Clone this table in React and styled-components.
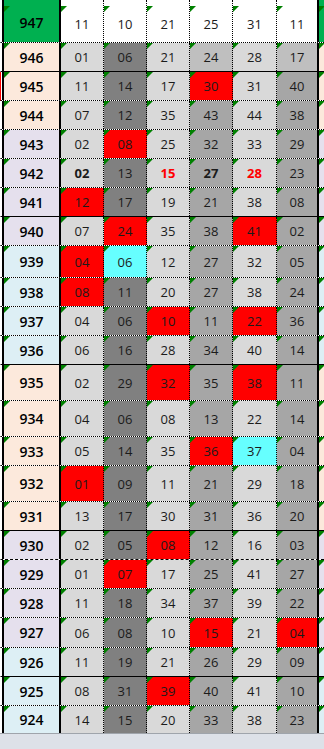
import React from "react";
import styled, { createGlobalStyle } from "styled-components";

const GlobalStyle = createGlobalStyle`
  html, body {
    margin: 0;
    padding: 0;
    background: #fff;
  }
  body {
    font-family: "Open Sans", "Liberation Sans", sans-serif;
    overflow: hidden;
  }
`;

const PEACH = "#fce9dc";
const LILAC = "#e5e0ed";
const SKY = "#ddeff5";

// * = red fill, ~ = cyan fill, ^ = bold, ! = bold red text, + = lighter grey
const ROWS = [
  { n: 947, v: "11 10 21 25 31 11", h: 43, bg: "#00b050", line: "dotted", head: true },
  { n: 946, v: "01 06 21 24+ 28 17+", h: 29, bg: PEACH, line: "solid" },
  { n: 945, v: "11 14 17 30* 31 40", h: 29, bg: PEACH, line: "dotted", mark: true },
  { n: 944, v: "07 12 35 43 44 38", h: 29, bg: PEACH, line: "dotted" },
  { n: 943, v: "02 08* 25 32 33 29", h: 29, bg: LILAC, line: "dotted" },
  { n: 942, v: "02^ 13 15! 27^ 28! 23", h: 29, bg: LILAC, line: "dotted" },
  { n: 941, v: "12* 17 19 21 38 08", h: 29, bg: LILAC, line: "solid" },
  { n: 940, v: "07 24* 35 38 41* 02", h: 29, bg: LILAC, line: "dotted" },
  { n: 939, v: "04* 06~ 12 27 32 05", h: 32, bg: SKY, line: "dotted" },
  { n: 938, v: "08* 11 20 27 38 24", h: 29, bg: SKY, line: "dotted" },
  { n: 937, v: "04 06 10* 11 22* 36", h: 29, bg: SKY, line: "dotted" },
  { n: 936, v: "06 16 28 34 40 14", h: 29, bg: SKY, line: "solid" },
  { n: 935, v: "02 29 32* 35 38* 11", h: 36, bg: PEACH, line: "dotted" },
  { n: 934, v: "04 06 08 13 22 14", h: 36, bg: PEACH, line: "dotted" },
  { n: 933, v: "05 14 35 36* 37~ 04", h: 29, bg: PEACH, line: "dotted" },
  { n: 932, v: "01* 09 11 21 29 18", h: 36, bg: PEACH, line: "dotted" },
  { n: 931, v: "13 17 30 31 36 20", h: 29, bg: PEACH, line: "solid" },
  { n: 930, v: "02 05 08* 12 16 03", h: 29, bg: LILAC, line: "dashed" },
  { n: 929, v: "01 07* 17 25 41 27", h: 29, bg: LILAC, line: "dotted" },
  { n: 928, v: "11 18 34 37 39 22", h: 29, bg: LILAC, line: "dotted" },
  { n: 927, v: "06 08 10 15* 21 04*", h: 30, bg: LILAC, line: "dotted" },
  { n: 926, v: "11 19 21 26 29 09", h: 29, bg: SKY, line: "solid" },
  { n: 925, v: "08 31 39* 40 41 10", h: 29, bg: SKY, line: "dotted" },
  { n: 924, v: "14 15 20 33 38 23", h: 27, bg: SKY, line: "none" },
];

const COL_BG = ["#d9d9d9", "#808080", "#d9d9d9", "#a6a6a6", "#d9d9d9", "#a6a6a6"];
const COL_W = [43, 43, 43, 43, 44, 42];

const Sheet = styled.div`
  width: 324px;
  height: 749px;
  display: flex;
  flex-direction: column;
  overflow: hidden;
`;

const Row = styled.div`
  display: flex;
  box-sizing: border-box;
  height: ${(p) => p.$h}px;
  padding-left: 1px;
  border-left: 1px solid ${(p) => (p.$mark ? "#ff0000" : "transparent")};
  border-bottom: ${(p) => (p.$line === "none" ? "0" : `1px ${p.$line} #000`)};
`;

const flag = (top) => `
  &::before {
    content: "";
    position: absolute;
    left: 0;
    top: ${top}px;
    border-top: 6px solid #008000;
    border-right: 6px solid transparent;
  }
`;

const Label = styled.div`
  position: relative;
  flex: none;
  width: 55px;
  border-left: 2px solid #000;
  border-right: 2px solid #000;
  background: ${(p) => p.$bg};
  display: flex;
  align-items: center;
  justify-content: center;
  box-sizing: content-box;
  padding-top: ${(p) => (p.$head ? 2 : 0)}px;
  font-size: 14px;
  font-weight: 600;
  color: #000;
  ${(p) => flag(p.$head ? 6 : 0)}
`;

const Cell = styled.div`
  position: relative;
  flex: none;
  box-sizing: border-box;
  width: ${(p) => p.$w}px;
  border-right: ${(p) => (p.$last ? "2px solid #000" : "1px dotted #000")};
  background: ${(p) => p.$bg};
  display: flex;
  align-items: center;
  justify-content: center;
  padding-top: ${(p) => (p.$head ? 5 : 0)}px;
  font-size: 13px;
  font-weight: ${(p) => (p.$bold ? 700 : 400)};
  color: ${(p) => (p.$red ? "#ff0000" : "#1b1b1b")};
  ${(p) => flag(p.$head ? 6 : 0)}
`;

const Edge = styled.div`
  position: relative;
  flex: 1;
  background: ${(p) => p.$bg};
  ${(p) => flag(p.$head ? 6 : 0)}
`;

const Footer = styled.div`
  flex: 1;
  border-top: 1px solid #9fa4ab;
  background: #dde1e8;
`;

function parse(token) {
  const num = token.replace(/[*~^!+]/g, "");
  return {
    num,
    red: token.includes("*"),
    cyan: token.includes("~"),
    bold: token.includes("^") || token.includes("!"),
    redText: token.includes("!"),
    light: token.includes("+"),
  };
}

function SheetRow({ row }) {
  const cells = row.v.split(" ").map(parse);
  return (
    <Row $h={row.h} $line={row.line} $mark={row.mark}>
      <Label $bg={row.bg} $head={row.head}>
        {row.n}
      </Label>
      {cells.map((c, i) => {
        let bg = COL_BG[i];
        if (row.head) bg = "#fff";
        if (c.light) bg = "#bfbfbf";
        if (c.red) bg = "#ff0000";
        if (c.cyan) bg = "#66ffff";
        return (
          <Cell
            key={i}
            $w={COL_W[i]}
            $last={i === 5}
            $bg={bg}
            $head={row.head}
            $bold={c.bold}
            $red={c.redText}
          >
            {c.num}
          </Cell>
        );
      })}
      <Edge $bg={row.bg} $head={row.head} />
    </Row>
  );
}

export default function App() {
  return (
    <>
      <GlobalStyle />
      <Sheet>
        {ROWS.map((row) => (
          <SheetRow key={row.n} row={row} />
        ))}
        <Footer />
      </Sheet>
    </>
  );
}
